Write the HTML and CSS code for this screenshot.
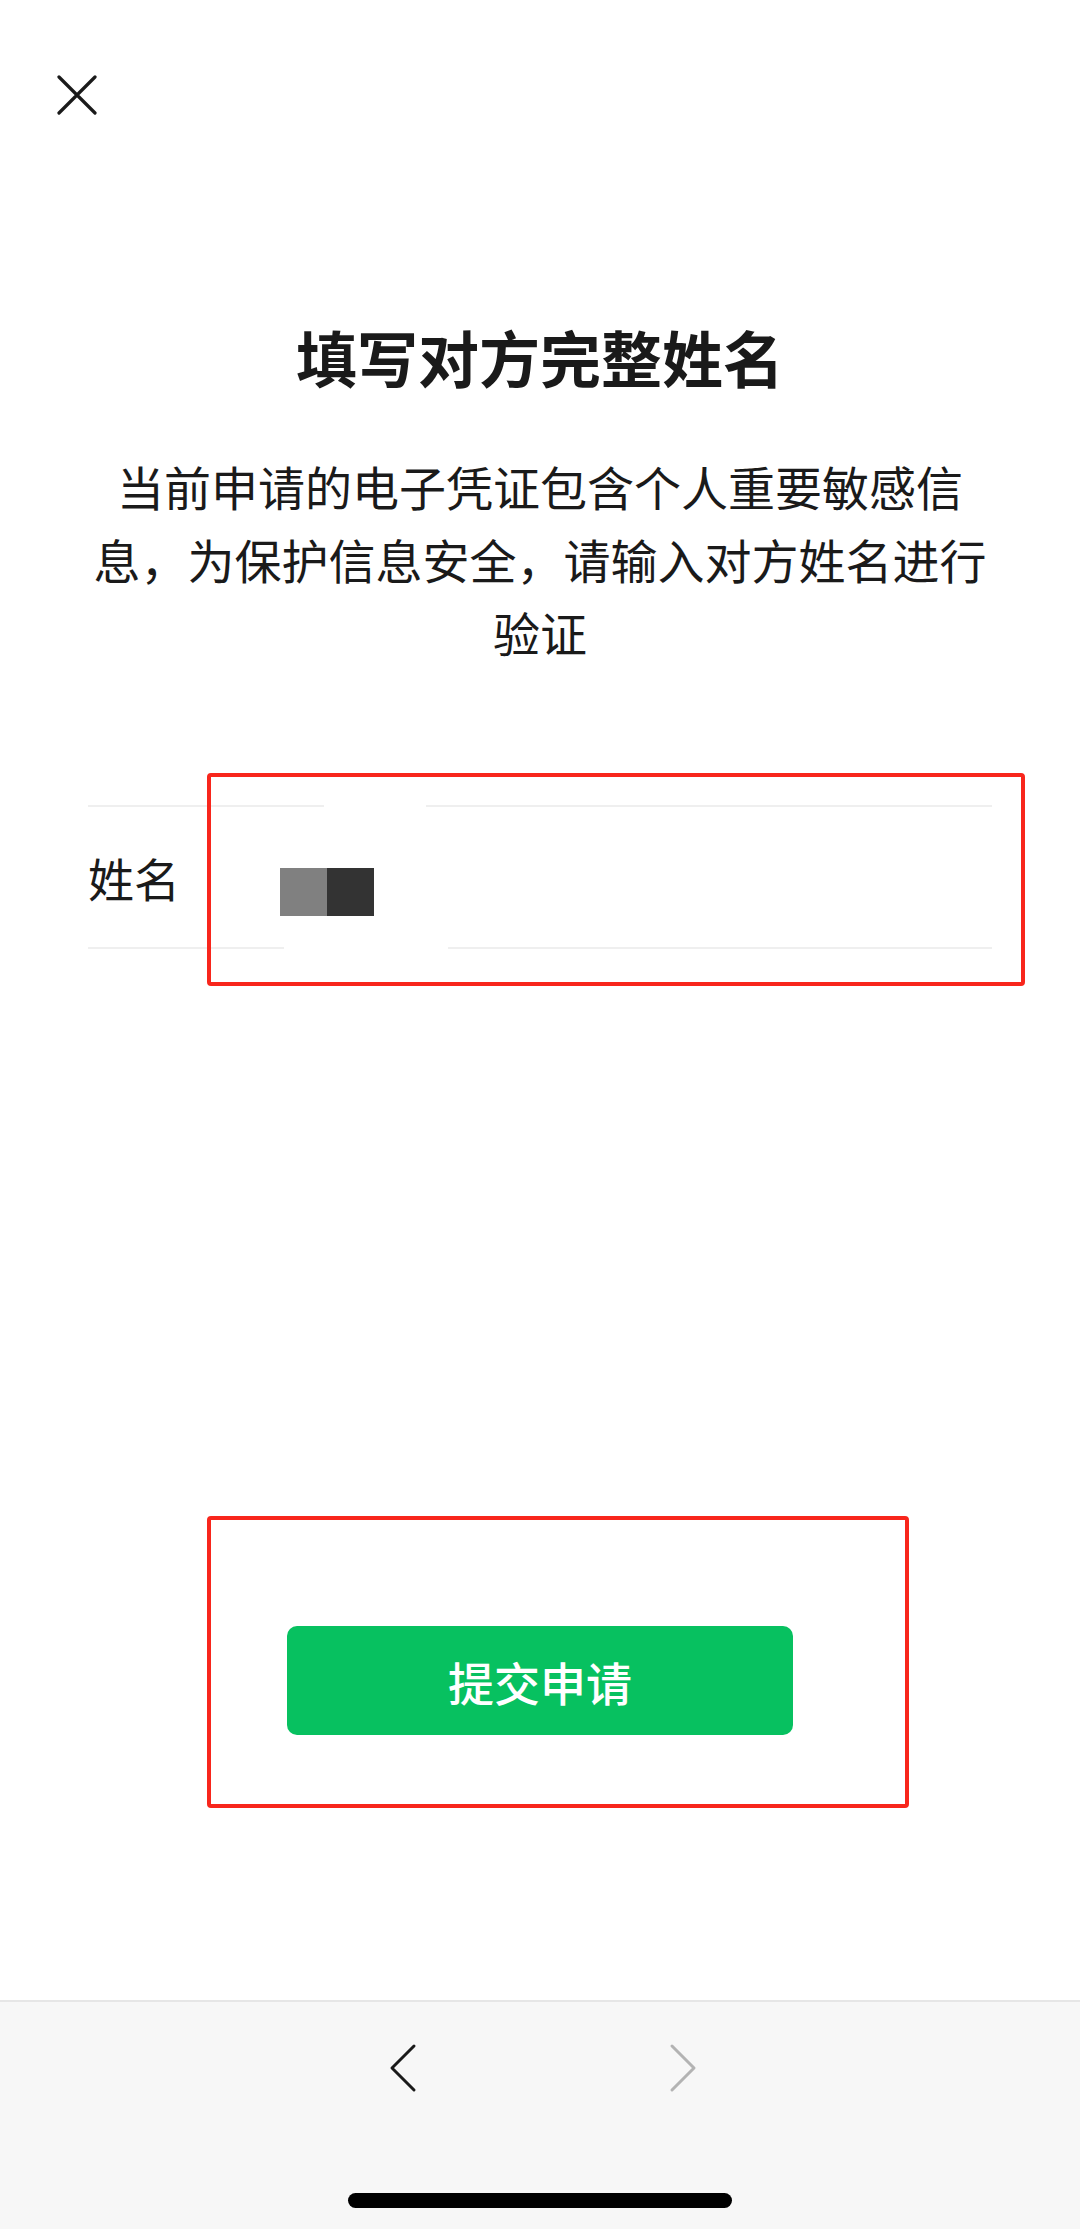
FILE: index.html
```html
<!DOCTYPE html>
<html lang="zh-CN">
<head>
<meta charset="utf-8">
<title>填写对方完整姓名</title>
<link rel="stylesheet" href="styles.css">
</head>
<body>
<div class="page">
  <main class="main">
    <div class="top-bar">
      <svg class="close" width="40" height="40" viewBox="0 0 40 40">
        <path d="M2 2 L38 38 M38 2 L2 38" stroke="#1a1a1a" stroke-width="3.2" stroke-linecap="round" fill="none"/>
      </svg>
    </div>
    <h1 class="title">填写对方完整姓名</h1>
    <p class="desc">当前申请的电子凭证包含个人重要敏感信息，为保护信息安全，请输入对方姓名进行验证</p>
    <div class="form-row">
      <span class="label">姓名</span>
      <span class="censor"><span class="c1"></span><span class="c2"></span></span>
      <span class="gap gap-top"></span>
      <span class="gap gap-bottom"></span>
      <span class="mark mark-field"></span>
    </div>
    <div class="btn-wrap">
      <button class="btn">提交申请</button>
      <span class="mark mark-btn"></span>
    </div>
  </main>
  <footer class="bottom-bar">
    <div class="nav">
      <svg width="30" height="50" viewBox="0 0 30 50">
        <path d="M25 3 L3 25 L25 47" stroke="#1a1a1a" stroke-width="3" stroke-linecap="round" stroke-linejoin="round" fill="none"/>
      </svg>
      <svg width="30" height="50" viewBox="0 0 30 50">
        <path d="M5 3 L27 25 L5 47" stroke="#b3b3b3" stroke-width="3" stroke-linecap="round" stroke-linejoin="round" fill="none"/>
      </svg>
    </div>
    <div class="home-indicator"></div>
  </footer>
</div>
</body>
</html>
```

FILE: styles.css
```css
html, body {
  margin: 0;
  padding: 0;
  background: #ffffff;
}
body {
  font-family: "Noto Sans CJK SC", "Noto Sans", sans-serif;
  color: #1a1a1a;
}
.page {
  width: 1080px;
  min-height: 2229px;
  display: flex;
  flex-direction: column;
  position: relative;
}
.main {
  flex: 1;
  display: flex;
  flex-direction: column;
  position: relative;
}
.top-bar {
  height: 190px;
  box-sizing: border-box;
  padding: 75px 0 0 57px;
}
.close {
  display: block;
}
.title {
  margin: 127px 0 0;
  font-size: 61px;
  line-height: 80px;
  font-weight: 700;
  text-align: center;
  color: #1a1a1a;
}
.desc {
  margin: 52px 86px 0;
  font-size: 47px;
  line-height: 73px;
  text-align: center;
  color: #1a1a1a;
}
.form-row {
  margin: 137px 88px 0;
  height: 144px;
  box-sizing: border-box;
  border-top: 2px solid #efefef;
  border-bottom: 2px solid #efefef;
  display: flex;
  align-items: center;
  position: relative;
}
.label {
  width: 192px;
  font-size: 46px;
  line-height: 60px;
  color: #1a1a1a;
}
.censor {
  display: flex;
  margin-top: 30px;
}
.c1, .c2 {
  display: block;
  width: 47px;
  height: 48px;
}
.c1 { background: #808080; }
.c2 { background: #333333; }
.gap {
  position: absolute;
  background: #ffffff;
  height: 6px;
}
.gap-top {
  top: -4px;
  left: 236px;
  width: 102px;
}
.gap-bottom {
  bottom: -4px;
  left: 196px;
  width: 164px;
}
.mark {
  position: absolute;
  border: 4px solid #f8261c;
  border-radius: 4px;
  box-sizing: border-box;
}
.mark-field {
  left: 119px;
  top: -34px;
  width: 818px;
  height: 213px;
}
.btn-wrap {
  position: relative;
  margin-top: 677px;
  display: flex;
  justify-content: center;
}
.btn {
  width: 506px;
  height: 109px;
  border: none;
  border-radius: 10px;
  background: #07c160;
  color: #ffffff;
  font-family: "Noto Sans CJK SC", "Noto Sans", sans-serif;
  font-size: 46px;
  font-weight: 500;
  letter-spacing: 0;
  padding: 0;
}
.mark-btn {
  left: 207px;
  top: -110px;
  width: 702px;
  height: 292px;
}
.bottom-bar {
  height: 229px;
  box-sizing: border-box;
  background: #f7f7f7;
  border-top: 2px solid #e6e6e6;
  display: flex;
  flex-direction: column;
  align-items: center;
  padding-top: 41px;
}
.nav {
  display: flex;
  gap: 248px;
  padding-left: 6px;
}
.nav svg {
  display: block;
}
.home-indicator {
  margin-top: 100px;
  width: 384px;
  height: 15px;
  border-radius: 8px;
  background: #000000;
}
```
